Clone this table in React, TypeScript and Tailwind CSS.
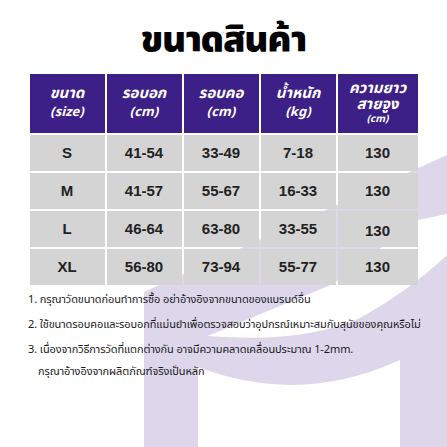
import React from 'react';

const rows = [
  { size: 'S', chest: '41-54', neck: '33-49', weight: '7-18', length: '130' },
  { size: 'M', chest: '41-57', neck: '55-67', weight: '16-33', length: '130' },
  { size: 'L', chest: '46-64', neck: '63-80', weight: '33-55', length: '130', low: true },
  { size: 'XL', chest: '56-80', neck: '73-94', weight: '55-77', length: '130' },
];

const notes = [
  ['1. กรุณาวัดขนาดก่อนทำการซื้อ อย่าอ้างอิงจากขนาดของแบรนด์อื่น'],
  ['2. ใช้ขนาดรอบคอและรอบอกที่แม่นยำเพื่อตรวจสอบว่าอุปกรณ์เหมาะสมกับสุนัขของคุณหรือไม่'],
  ['3. เนื่องจากวิธีการวัดที่แตกต่างกัน อาจมีความคลาดเคลื่อนประมาณ 1-2mm.', 'กรุณาอ้างอิงจากผลิตภัณฑ์จริงเป็นหลัก'],
];

// faint logo behind the notes
const Watermark = () => (
  <svg className="absolute inset-0" width="447" height="447" viewBox="0 0 447 447">
    <g fill="#ded7ec">
      <polygon points="144,447 144,292 447,155 447,214 418,220 333,284 198,340 198,447" />
      <path d="M198,335 Q300,345 360,318 Q410,290 447,255 L447,447 L400,447 L400,360 Q300,406 198,367 Z" />
    </g>
  </svg>
);

const HeadCell = ({ top, bottom, small }: { top: string[]; bottom: string; small?: boolean }) => (
  <div className="bg-[#3d1f88] flex flex-col items-center justify-center text-white italic font-bold">
    {top.map((t) => (
      <span key={t} className="text-[15px] leading-[16px]">{t}</span>
    ))}
    <span className={small ? 'text-[10px] leading-[13px]' : 'text-[13px] leading-[18px] mt-[1px]'}>{bottom}</span>
  </div>
);

export default function App() {
  return (
    <div className="relative w-[447px] h-[447px] bg-white overflow-hidden font-['Noto_Sans_Thai','Liberation_Sans',sans-serif]">
      <Watermark />
      <div className="relative flex flex-col items-center">
        <h1 className="pt-[16px] text-[36px] leading-[48px] font-black text-black tracking-tight">ขนาดสินค้า</h1>

        <div className="mt-[10px] grid grid-cols-[75px_75px_75px_75px_80px] auto-rows-[36px] grid-rows-[59px] gap-[2px]">
          <HeadCell top={['ขนาด']} bottom="(size)" />
          <HeadCell top={['รอบอก']} bottom="(cm)" />
          <HeadCell top={['รอบคอ']} bottom="(cm)" />
          <HeadCell top={['น้ำหนัก']} bottom="(kg)" />
          <HeadCell top={['ความยาว', 'สายจูง']} bottom="(cm)" small />
          {rows.map((r) => (
            <React.Fragment key={r.size}>
              {[r.size, r.chest, r.neck, r.weight].map((v, i) => (
                <div key={i} className="bg-[#d4d4d4] flex items-center justify-center font-['Liberation_Sans',sans-serif] font-bold text-[15px] text-[#222]">
                  {v}
                </div>
              ))}
              <div className={`bg-[#d4d4d4] flex items-center justify-center font-['Liberation_Sans',sans-serif] font-bold text-[15px] text-[#222] ${r.low ? 'pt-[5px]' : ''}`}>
                {r.length}
              </div>
            </React.Fragment>
          ))}
        </div>
      </div>

      <div className="relative pl-[28px] pt-[4px] flex flex-col gap-[3px] text-[11px] leading-[22px] tracking-[-0.1px] text-[#1a1a1a] whitespace-nowrap">
        {notes.map((n, i) => (
          <div key={i} className="flex flex-col">
            {n.map((line, j) => (
              <span key={j} className={j > 0 ? 'pl-[10px]' : ''}>{line}</span>
            ))}
          </div>
        ))}
      </div>
    </div>
  );
}
